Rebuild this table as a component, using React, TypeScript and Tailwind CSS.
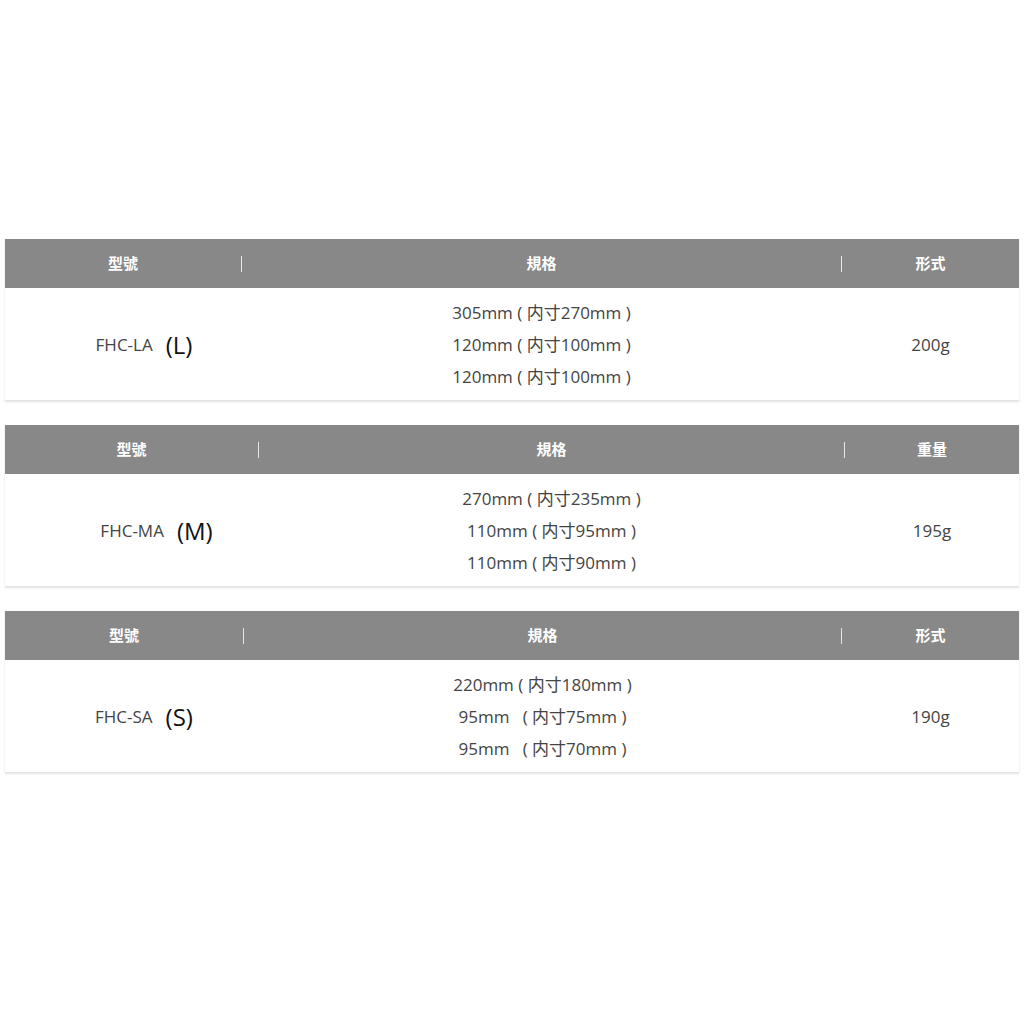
const rows = [
  {
    head: ["型號", "規格", "形式"],
    widths: ["w-[236px]", "w-[599px]", "flex-1"],
    model: "FHC-LA",
    size: "(L)",
    pad: "pl-[42px]",
    specs: ["305mm ( 内寸270mm )", "120mm ( 内寸100mm )", "120mm ( 内寸100mm )"],
    weight: "200g",
  },
  {
    head: ["型號", "規格", "重量"],
    widths: ["w-[253px]", "w-[585px]", "flex-1"],
    model: "FHC-MA",
    size: "(M)",
    pad: "pl-[50px]",
    specs: ["270mm ( 内寸235mm )", "110mm ( 内寸95mm )", "110mm ( 内寸90mm )"],
    weight: "195g",
  },
  {
    head: ["型號", "規格", "形式"],
    widths: ["w-[238px]", "w-[597px]", "flex-1"],
    model: "FHC-SA",
    size: "(S)",
    pad: "pl-[40px]",
    specs: ["220mm ( 内寸180mm )", "95mm\u00a0\u00a0 ( 内寸75mm )", "95mm\u00a0\u00a0 ( 内寸70mm )"],
    weight: "190g",
  },
];

type Row = (typeof rows)[number];

function SpecTable({ row }: { row: Row }) {
  return (
    <div className="w-[1014px] bg-white shadow-[0_1px_2px_rgba(0,0,0,0.12)]">
      {/* 表頭 */}
      <div className="flex h-[49px] items-center bg-[#888888] text-[15px] font-bold text-white">
        <div className={`${row.widths[0]} text-center`}>{row.head[0]}</div>
        <span className="h-4 w-px bg-white/80" />
        <div className={`${row.widths[1]} text-center`}>{row.head[1]}</div>
        <span className="h-4 w-px bg-white/80" />
        <div className="flex-1 text-center">{row.head[2]}</div>
      </div>
      {/* 內容 */}
      <div className="flex h-[113px] items-center border-b border-[#e4e4e4] pt-[2px] text-[17px] text-[#444]">
        <div className={`${row.widths[0]} ${row.pad} flex items-center justify-center gap-[13px]`}>
          <span>{row.model}</span>
          <span className="text-[24px] leading-none text-[#111]">{row.size}</span>
        </div>
        <div className="w-px" />
        <div className={`${row.widths[1]} flex flex-col items-center leading-[32px]`}>
          {row.specs.map((s, i) => (
            <span key={i} className="whitespace-pre">{s}</span>
          ))}
        </div>
        <div className="w-px" />
        <div className="flex-1 text-center">{row.weight}</div>
      </div>
    </div>
  );
}

export default function App() {
  return (
    <div
      className="min-h-[1024px] w-[1024px] bg-white px-[5px] pt-[239px]"
      style={{ fontFamily: "'Open Sans', 'Noto Sans CJK TC', sans-serif" }}
    >
      <div className="flex flex-col gap-[24px]">
        {rows.map((r, i) => (
          <SpecTable key={i} row={r} />
        ))}
      </div>
    </div>
  );
}
